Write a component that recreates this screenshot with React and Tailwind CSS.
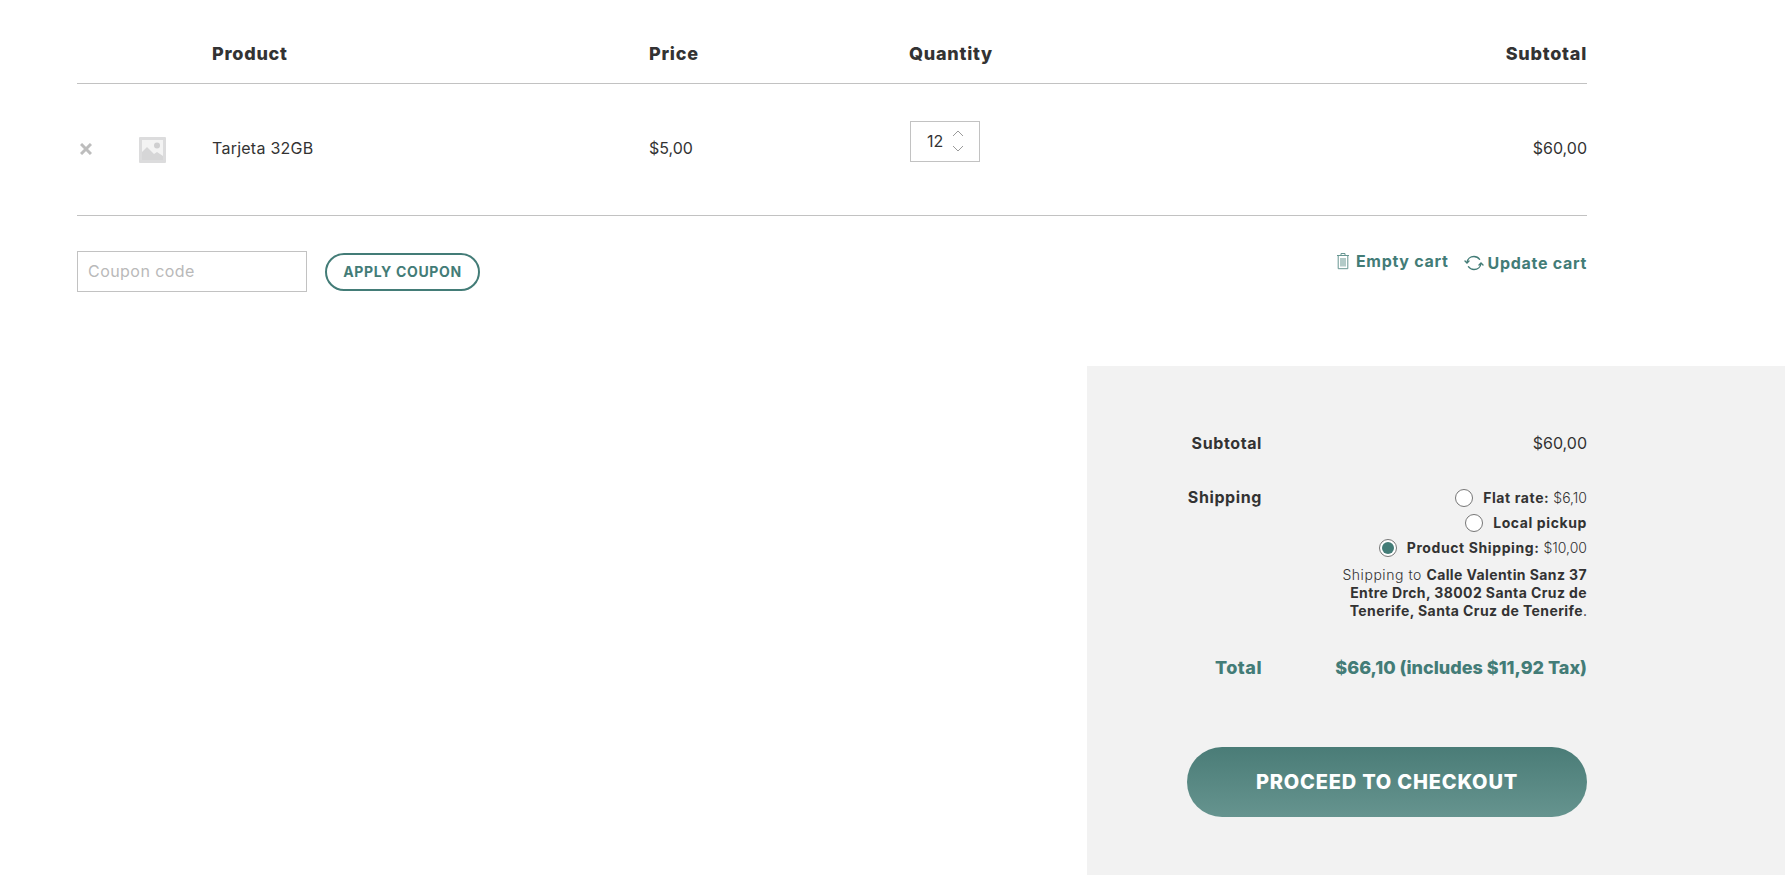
import { useState } from "react";

const TEAL = "text-[#437c77]";

function ImagePlaceholder() {
  return (
    <svg viewBox="0 0 27 26" width="27" height="26">
      <rect width="27" height="26" rx="1" fill="#dcdcdd" />
      <rect x="3" y="3" width="21" height="20" fill="#f3f3f3" />
      <circle cx="18" cy="8.500" r="3" fill="#cfcfd0" />
      <path d="M3 15l5-5 7 7 3-2 6 4v4H3z" fill="#d6d6d7" />
    </svg>
  );
}

function TrashIcon() {
  return (
    <svg viewBox="0 0 14 18" width="14" height="18" fill="none" stroke="#437c77" strokeWidth="1" className="opacity-80">
      <path d="M1 3.500h12M5 3V1.500h4V3M2.200 3.500v13.200h9.600V3.500M5 6v8.500M7 6v8.500M9 6v8.500" />
    </svg>
  );
}

function RefreshIcon() {
  return (
    <svg viewBox="0 0 20 18" width="20" height="18" fill="none" stroke="#437c77" strokeWidth="1.4" strokeLinecap="round" strokeLinejoin="round">
      <path d="M3 8.500C3.400 5 6.200 2.500 10 2.500c2.400 0 4.300 1 5.600 2.800M17 9.500c-.4 3.500-3.200 6-7 6-2.400 0-4.300-1-5.600-2.800" />
      <path d="M1 7l2 2 2-2M15 11l2-2 2 2" />
    </svg>
  );
}

function Radio({ checked }) {
  return (
    <span className="mr-[10px] flex h-[18px] w-[18px] items-center justify-center rounded-full border border-[#767676] bg-white">
      {checked && <span className="h-[12px] w-[12px] rounded-full bg-[#437c77]" />}
    </span>
  );
}

function ShippingOption({ label, price, checked }) {
  return (
    <div className="flex h-[25px] items-center justify-end text-[14px] text-[#333333]">
      <Radio checked={checked} />
      <span>
        <b className="font-bold tracking-[0.6px]">{label}</b>
        {price && <span className="font-light"> {price}</span>}
      </span>
    </div>
  );
}

export default function App() {
  const [qty] = useState(12);

  return (
    <div className="flex h-[875px] flex-col overflow-hidden bg-white font-[Inter,sans-serif] text-[#333333]">
      <div className="ml-[77px] w-[1510px]">
        {/* Cart table header */}
        <div className="flex h-[84px] items-center border-b border-[#c2c2c2] pt-[23px] text-[18px] font-extrabold tracking-[0.75px]">
          <span className="ml-[135px] w-[437px]">Product</span>
          <span className="w-[260px]">Price</span>
          <span>Quantity</span>
          <span className="ml-auto">Subtotal</span>
        </div>

        {/* Cart row */}
        <div className="flex h-[132px] items-center border-b border-[#c2c2c2] pb-[4px] text-[16px]">
          <span className="flex w-[62px] pl-[3px] pt-[3px]">
            <svg viewBox="0 0 12 12" width="12" height="12" stroke="#bdbdbd" strokeWidth="3">
              <path d="M1 1l10 10M11 1L1 11" />
            </svg>
          </span>
          <span className="flex w-[73px] pt-[4px]">
            <ImagePlaceholder />
          </span>
          <span className="w-[437px] tracking-[0.25px]">Tarjeta 32GB</span>
          <span className="w-[260px]">$5,00</span>
          <div className="-mt-[13px] ml-[1px] flex h-[41px] w-[70px] items-center border border-[#c2c2c2] pl-[16px]">
            <span className="w-[25px] text-[16px] font-normal">{qty}</span>
            <span className="flex flex-col gap-[8px]">
              <svg viewBox="0 0 12 7" width="12" height="7" fill="none" stroke="#9a9a9a"><path d="M1 6l5-5 5 5" /></svg>
              <svg viewBox="0 0 12 7" width="12" height="7" fill="none" stroke="#9a9a9a"><path d="M1 1l5 5 5-5" /></svg>
            </span>
          </div>
          <span className="ml-auto">$60,00</span>
        </div>

        {/* Coupon and cart actions */}
        <div className="mt-[35px] flex h-[41px] items-center">
          <div className="flex h-[41px] w-[230px] items-center border border-[#c2c2c2] pb-[2px] pl-[10px] text-[16px] tracking-[0.45px] text-[#b9b9b9]">
            Coupon code
          </div>
          <button className={`ml-[18px] h-[38px] w-[155px] rounded-full border-2 border-[#437c77] text-[14px] font-bold tracking-[0.65px] ${TEAL}`}>
            APPLY COUPON
          </button>
          <div className={`ml-auto flex items-center pb-[17px] text-[16px] font-bold tracking-[0.7px] ${TEAL}`}>
            <span className="-mt-[4px] flex items-center gap-[6px]">
              <TrashIcon />
              Empty cart
            </span>
            <span className="ml-[15px] flex items-center gap-[4px]">
              <RefreshIcon />
              Update cart
            </span>
          </div>
        </div>
      </div>

      {/* Cart totals */}
      <div className="mt-[74px] ml-[1087px] flex-1 bg-[#f2f2f2] pl-[100px] pr-[198px] pt-[64px]">
        <div className="flex h-[26px] items-center justify-between">
          <span className="flex w-[75px] justify-end whitespace-nowrap text-[16px] font-bold tracking-[0.6px]">Subtotal</span>
          <span className="text-[16px]">$60,00</span>
        </div>

        <div className="mt-[27px] flex">
          <span className="flex w-[75px] shrink-0 justify-end whitespace-nowrap pt-[1px] text-[16px] font-bold leading-[26px] tracking-[0.6px]">Shipping</span>
          <div className="flex-1 pt-[2px]">
            <ShippingOption label="Flat rate:" price="$6,10" />
            <ShippingOption label="Local pickup" />
            <ShippingOption label="Product Shipping:" price="$10,00" checked />
            <p className="mt-[6px] whitespace-nowrap text-right text-[14px] leading-[18px]">
              <span className="font-light tracking-[0.55px]">Shipping to </span>
              <b className="font-bold tracking-[0.4px]">
                Calle Valentin Sanz 37
                <br />
                Entre Drch, 38002 Santa Cruz de
                <br />
                Tenerife, Santa Cruz de Tenerife
              </b>
              .
            </p>
          </div>
        </div>

        <div className={`mt-[33px] flex h-[28px] items-center justify-between whitespace-nowrap text-[18px] font-extrabold ${TEAL}`}>
          <span className="flex w-[75px] justify-end tracking-[0.5px]">Total</span>
          <span>$66,10 (includes $11,92 Tax)</span>
        </div>

        <button className="mt-[66px] h-[70px] w-[400px] rounded-[35px] bg-gradient-to-b from-[#4a7c77] to-[#66948f] text-[20px] font-extrabold tracking-[0.8px] text-white">
          PROCEED TO CHECKOUT
        </button>
      </div>
    </div>
  );
}
